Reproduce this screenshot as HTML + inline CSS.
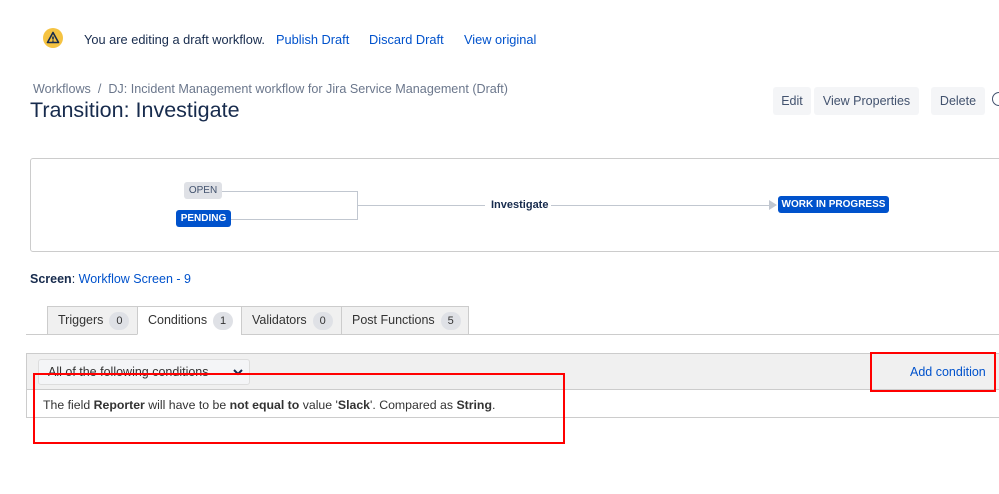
<!DOCTYPE html>
<html><head><meta charset="utf-8"><style>
*{box-sizing:border-box;margin:0;padding:0}
body{width:999px;height:494px;background:#fff;font-family:"Liberation Sans",sans-serif;color:#172b4d;position:relative;overflow:hidden;font-size:12.5px}
.a{position:absolute;white-space:nowrap}
.link{color:#0052cc}
.btn{position:absolute;top:87px;height:28px;background:#f4f5f7;border-radius:3px;color:#42526e;font-size:12.5px;line-height:28px;text-align:center;white-space:nowrap}
.lz{position:absolute;font-size:10px;font-weight:bold;line-height:17px;text-align:center;border-radius:3px;white-space:nowrap}
.tab{position:absolute;top:306px;height:29px;border:1px solid #ccc;background:#f0f0f0;font-size:12.5px;line-height:27px;padding-left:10px;color:#333;white-space:nowrap}
.cnt{display:inline-block;background:#dfe1e6;border-radius:10px;font-size:11px;min-width:20px;text-align:center;line-height:18px;margin-left:6px;color:#333}
.hl{position:absolute;background:#c1c7d0;height:1px}
</style></head><body>
<svg class="a" style="left:43px;top:28px" width="20" height="20" viewBox="0 0 20 20"><circle cx="10" cy="10" r="10" fill="#f5c342"/><path d="M10 4.5 L15.5 14.5 H4.5 Z" fill="none" stroke="#172b4d" stroke-width="1.6" stroke-linejoin="round"/><path d="M10 8.5v3" stroke="#172b4d" stroke-width="1.6"/><circle cx="10" cy="13" r=".8" fill="#172b4d"/></svg>
<div class="a" style="left:84px;top:31px;line-height:17px;font-size:12.8px">You are editing a draft workflow.</div>
<div class="a link" style="left:276px;top:31px;line-height:17px;font-size:12.8px">Publish Draft</div>
<div class="a link" style="left:369px;top:31px;line-height:17px;font-size:12.8px">Discard Draft</div>
<div class="a link" style="left:464px;top:31px;line-height:17px;font-size:12.8px">View original</div>
<div class="a" style="left:33px;top:81px;color:#6b778c;line-height:17px;font-size:12.6px">Workflows &nbsp;/ &nbsp;DJ: Incident Management workflow for Jira Service Management (Draft)</div>
<div class="a" style="left:30px;top:97px;font-size:21.5px;line-height:27px">Transition: Investigate</div>
<div class="btn" style="left:773px;width:38px">Edit</div>
<div class="btn" style="left:814px;width:105px">View Properties</div>
<div class="btn" style="left:931px;width:54px">Delete</div>
<div class="a" style="left:992px;top:92px;width:14px;height:14px;border:1.5px solid #42526e;border-radius:50%"></div>
<div class="a" style="left:30px;top:158px;width:1000px;height:94px;border:1px solid #ccc;border-radius:3px"></div>
<div class="lz" style="left:184px;top:182px;width:38px;background:#dfe1e6;color:#42526e;font-weight:normal">OPEN</div>
<div class="lz" style="left:176px;top:210px;width:55px;background:#0052cc;color:#fff">PENDING</div>
<div class="hl" style="left:222px;top:191px;width:136px"></div>
<div class="hl" style="left:231px;top:219px;width:127px"></div>
<div class="a" style="left:357px;top:191px;width:1px;height:29px;background:#c1c7d0"></div>
<div class="hl" style="left:358px;top:205px;width:127px"></div>
<div class="a" style="left:491px;top:198px;font-size:11px;font-weight:bold;line-height:14px">Investigate</div>
<div class="hl" style="left:551px;top:205px;width:220px"></div>
<div class="a" style="left:769px;top:200px;width:0;height:0;border-left:8px solid #c1c7d0;border-top:5px solid transparent;border-bottom:5px solid transparent"></div>
<div class="lz" style="left:778px;top:196px;width:111px;background:#0052cc;color:#fff">WORK IN PROGRESS</div>
<div class="a" style="left:30px;top:271px;line-height:17px"><b>Screen</b>: <span class="link">Workflow Screen - 9</span></div>
<div class="a" style="left:26px;top:334px;width:980px;height:1px;background:#ccc"></div>
<div class="tab" style="left:47px;width:91px">Triggers<span class="cnt">0</span></div>
<div class="tab" style="left:137px;width:105px;background:#fff;border-bottom-color:#fff">Conditions<span class="cnt">1</span></div>
<div class="tab" style="left:241px;width:101px">Validators<span class="cnt">0</span></div>
<div class="tab" style="left:341px;width:128px">Post Functions<span class="cnt">5</span></div>
<div class="a" style="left:26px;top:353px;width:990px;height:65px;border:1px solid #ccc"></div>
<div class="a" style="left:27px;top:354px;width:990px;height:36px;background:#f0f0f0;border-bottom:1px solid #ccc"></div>
<div class="a" style="left:38px;top:359px;width:212px;height:26px;background:#f4f5f7;border:1px solid #ddd;border-radius:3px;line-height:24px;padding-left:9px;color:#333">All of the following conditions
<svg style="position:absolute;right:6px;top:8px" width="10" height="8" viewBox="0 0 10 8"><path d="M1 2 L5 6 L9 2" fill="none" stroke="#172b4d" stroke-width="2"/></svg></div>
<div class="a link" style="left:910px;top:364px;line-height:17px">Add condition</div>
<div class="a" style="left:43px;top:397px;line-height:17px;color:#333;font-size:12.3px">The field <b>Reporter</b> will have to be <b>not equal to</b> value '<b>Slack</b>'. Compared as <b>String</b>.</div>
<div class="a" style="left:33px;top:373px;width:532px;height:71px;border:2px solid #f00"></div>
<div class="a" style="left:870px;top:352px;width:126px;height:40px;border:2px solid #f00"></div>
</body></html>
